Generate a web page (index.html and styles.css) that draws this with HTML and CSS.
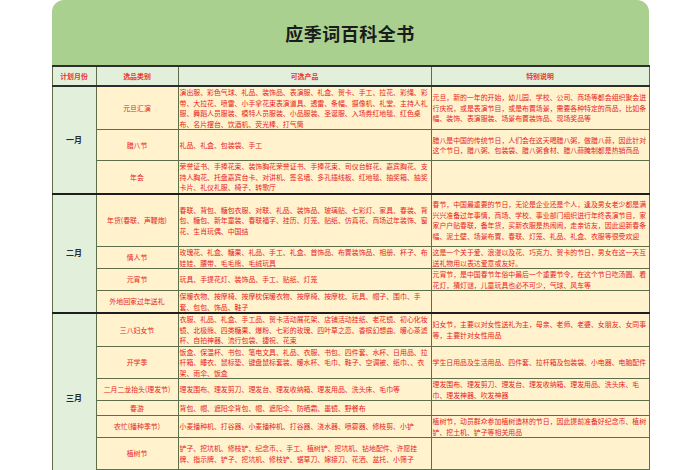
FILE: index.html
```html
<!DOCTYPE html>
<html lang="zh">
<head>
<meta charset="utf-8">
<title>应季词百科全书</title>
<link rel="stylesheet" href="styles.css">
</head>
<body>
<div class="sheet">
  <div class="title-bar"><h1 class="title">应季词百科全书</h1></div>
  <table class="grid">
    <colgroup>
      <col class="c-month"><col class="c-cat"><col class="c-prod"><col class="c-note">
    </colgroup>
    <thead>
      <tr class="h-head">
        <th>计划月份</th><th>选品类别</th><th>可选产品</th><th>特别说明</th>
      </tr>
    </thead>
    <tbody>
      <tr class="r43 grp-start">
        <td class="month" rowspan="3">一月</td>
        <td class="cat">元旦汇演</td>
        <td class="txt">演出服、彩色气球、礼品、装饰品、表演服、礼盒、贺卡、手工、拉花、彩绳、彩带、大拉花、喷雷、小手拿花束表演道具、透雷、条幅、摄像机、礼堂、主持人礼服、舞蹈人员服装、模特人员服装、小品服装、圣诞服、入场券红地毯、红色桌布、名片摆台、饮酒机、荧光棒、打气筒</td>
        <td class="txt">元旦，新的一年的开始，幼儿园、学校、公司、商场等都会组织聚会进行庆祝，或是表演节目，或是布置场景，需要各种特定的商品，比如条幅、装饰、表演服装、场景布置装饰品、现场奖品等</td>
      </tr>
      <tr class="r31">
        <td class="cat">腊八节</td>
        <td class="txt">礼品、礼盒、包装袋、手工</td>
        <td class="txt">腊八是中国的传统节日，人们会在这天喝腊八粥，做腊八蒜，因此针对这个节日，腊八粥、包装袋、腊八粥食材、腊八蒜腌制都是热销商品</td>
      </tr>
      <tr class="r33">
        <td class="cat">年会</td>
        <td class="txt">荣誉证书、手捧花束、装饰胸花荣誉证书、手捧花束、司仪台鲜花、嘉宾胸花、支持人胸花、托盘嘉宾台卡、对讲机、签名墙、多孔插线板、红地毯、抽奖箱、抽奖卡片、礼仪礼服、椅子、转歌厅</td>
        <td class="txt"></td>
      </tr>
      <tr class="r53 grp-start">
        <td class="month" rowspan="4">二月</td>
        <td class="cat">年货(春联、声鞭炮)</td>
        <td class="txt">春联、背包、糖包衣服、对联、礼品、装饰品、玻璃贴、七彩灯、家具、春装、背包、糖包、新年童装、春联福字、挂历、灯笼、贴纸、仿真花、商场过年装饰、窗花、生肖玩偶、中国结</td>
        <td class="txt">春节，中国最重要的节日，无论是企业还是个人，逢及男女老少都是满兴兴准备过年事情，商场、学校、事业部门组织进行年终表演节目，家家户户贴春联，备年货，买新衣服是热闹闹，走亲访友，因此迎新春条幅、泥土壁、场景布置、春联、灯笼、礼品、礼盒、衣服等很受欢迎</td>
      </tr>
      <tr class="r21">
        <td class="cat">情人节</td>
        <td class="txt">玫瑰花、礼盒、糖果、礼品、手工、礼盒、首饰品、布置装饰品、相册、杯子、布娃娃、腰带、毛毛熊、毛绒玩具</td>
        <td class="txt">这是一个关于爱、浪漫以及花、巧克力、贺卡的节日，男女在这一天互送礼物用以表达爱意或友好。</td>
      </tr>
      <tr class="r21">
        <td class="cat">元宵节</td>
        <td class="txt">玩具、手提花灯、装饰品、手工、贴纸、灯笼</td>
        <td class="txt">元宵节，是中国春节年俗中最后一个重要节令，在这个节日吃汤圆、看花灯，猜灯谜，儿童玩具也必不可少，气球、风车等</td>
      </tr>
      <tr class="r21">
        <td class="cat">外地回家过年送礼</td>
        <td class="txt">保暖衣物、按摩椅、按摩枕保暖衣物、按摩椅、按摩枕、玩具、帽子、围巾、手套、包包、饰品、鞋子</td>
        <td class="txt"></td>
      </tr>
      <tr class="r33 grp-start">
        <td class="month" rowspan="7">三月</td>
        <td class="cat">三八妇女节</td>
        <td class="txt">衣服、礼品、礼盒、手工品、贺卡活动展花架、店铺活动挂纸、老花镜、初心化妆镜、北极熊、四类糖果、爆粉、七彩的玫瑰、四叶草之恋、香槟幻想曲、暖心茶滤杯、自拍神器、流行包袋、捷祝、花束</td>
        <td class="txt">妇女节，主要以对女性送礼为主，母亲、老师、老婆、女朋友、女同事等，主要针对女性用品</td>
      </tr>
      <tr class="r32">
        <td class="cat">开学季</td>
        <td class="txt">饭盒、保温杯、书包、笔电文具、礼品、衣服、书包、四件套、水杯、日用品、拉杆箱、睡衣、鼠标垫、键盘鼠标套装、暖水杯、毛巾、鞋子、空调被、纸巾、、衣架、雨伞、饭盒</td>
        <td class="txt">学生日用品及生活用品、四件套、拉杆箱及包装袋、小电器、电脑配件</td>
      </tr>
      <tr class="r21">
        <td class="cat">二月二龙抬头(理发节)</td>
        <td class="txt">理发围布、理发剪刀、理发台、理发收纳箱、理发用品、洗头床、毛巾等</td>
        <td class="txt">理发围布、理发剪刀、理发台、理发收纳箱、理发用品、洗头床、毛巾、理发神器、吹发神器</td>
      </tr>
      <tr class="r15">
        <td class="cat">春游</td>
        <td class="txt">背包、帽、遮阳伞背包、帽、遮阳伞、防晒霜、墨镜、野餐布</td>
        <td class="txt"></td>
      </tr>
      <tr class="r21">
        <td class="cat">农忙(播种季节)</td>
        <td class="txt">小麦播种机、打谷器、小麦播种机、打谷器、浇水器、喷雾器、修枝剪、小铲</td>
        <td class="txt">植树节，动员群众参加植树造林的节日，因此提前准备好纪念币、植树铲、挖土机、铲子等相关用品</td>
      </tr>
      <tr class="r32">
        <td class="cat">植树节</td>
        <td class="txt">铲子、挖坑机、修枝铲、纪念币、、手工、植树铲、挖坑机、钻地配件、许愿挂牌、指示牌、铲子、挖坑机、修枝铲、锯草刀、嫁接刀、花洒、盆托、小筛子</td>
        <td class="txt"></td>
      </tr>
      <tr class="r-last">
        <td class="cat top">3月12植树节</td>
        <td class="txt top">花卉、绿植、树苗、自制花篮</td>
        <td class="txt"></td>
      </tr>
    </tbody>
  </table>
</div>
</body>
</html>
```
FILE: styles.css
```css
html, body {
  margin: 0;
  padding: 0;
  background: #ffffff;
  height: 470px;
  overflow: hidden;
}
body {
  font-family: "Noto Sans CJK SC", "Noto Sans", sans-serif;
}
.sheet {
  width: 597px;
  margin: 0 auto;
}
.title-bar {
  height: 65px;
  background: #a9d08e;
  border-radius: 12px 12px 0 0;
  display: flex;
  align-items: center;
  justify-content: center;
}
.title {
  margin: 0;
  font-size: 18px;
  font-weight: 700;
  color: #1b1b1b;
  letter-spacing: 0.5px;
}
.grid {
  width: 597px;
  table-layout: fixed;
  border-collapse: collapse;
  background: #fff2cc;
}
.c-month { width: 44px; }
.c-cat { width: 82px; }
.c-prod { width: 253px; }
.c-note { width: 218px; }
.grid th, .grid td {
  border: 1px solid #5e6e4a;
  padding: 0 1px;
  font-size: 6.9px;
  line-height: 10.5px;
  color: #e8231e;
  vertical-align: middle;
  word-break: break-all;
}
.h-head {
  height: 20px;
}
.h-head th {
  background: #e2efda;
  font-weight: 700;
  text-align: center;
  border-top: 2px solid #2e2e2e;
  border-bottom: 2px solid #2e2e2e;
  color: #e8352e;
}
.grid .month {
  background: #e2efda;
  color: #2a2a2a;
  font-weight: 700;
  font-size: 8px;
  text-align: center;
}
.grid .cat {
  text-align: center;
}
.grid .txt {
  text-align: left;
}
.grid .top {
  vertical-align: top;
  padding-top: 1px;
}
.grp-start td {
  border-top: 2px solid #1e1e1e;
}
.r15 { height: 15px; }
.r21 { height: 21px; }
.r31 { height: 31px; }
.r32 { height: 32px; }
.r33 { height: 33px; }
.r43 { height: 43px; }
.r53 { height: 53px; }
.r-last { height: 12px; }
```
